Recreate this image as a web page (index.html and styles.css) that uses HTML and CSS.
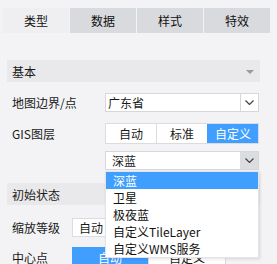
FILE: index.html
```html
<!DOCTYPE html>
<html lang="zh">
<head>
<meta charset="utf-8">
<link rel="stylesheet" href="styles.css">
</head>
<body>
<div class="tabs">
  <div class="tab active">类型</div>
  <div class="tab">数据</div>
  <div class="tab">样式</div>
  <div class="tab">特效</div>
</div>
<div class="panel">
  <div class="section-head"><span>基本</span><span class="tri"></span></div>
  <div class="row r1">
    <div class="label">地图边界/点</div>
    <div class="select"><span class="val v1">广东省</span><span class="btn"><svg width="9" height="5" viewBox="0 0 9 5"><path d="M0.5 0.5 L4.5 4.5 L8.5 0.5" fill="none" stroke="#444" stroke-width="1.2"/></svg></span></div>
  </div>
  <div class="row r2">
    <div class="label">GIS图层</div>
    <div class="seg">
      <span class="opt">自动</span><span class="opt">标准</span><span class="opt on">自定义</span>
    </div>
  </div>
  <div class="row r3">
    <div class="label"></div>
    <div class="select open"><span class="val v2">深蓝</span><span class="btn"><svg width="9" height="5" viewBox="0 0 9 5"><path d="M0.5 0.5 L4.5 4.5 L8.5 0.5" fill="none" stroke="#444" stroke-width="1.2"/></svg></span>
      <ul class="menu">
        <li class="sel">深蓝</li>
        <li>卫星</li>
        <li>极夜蓝</li>
        <li>自定义TileLayer</li>
        <li>自定义WMS服务</li>
      </ul>
    </div>
  </div>
  <div class="section-head s2"><span>初始状态</span></div>
  <div class="row r4">
    <div class="label short">缩放等级</div>
    <div class="seg seg2"><span class="opt o-small">自动</span><span class="opt o-rest"></span></div>
  </div>
  <div class="row r5">
    <div class="label short">中心点</div>
    <div class="seg seg3"><span class="opt on">自动</span><span class="opt">自定义</span></div>
  </div>
</div>
</body>
</html>
```
FILE: styles.css
```css
* { box-sizing: border-box; }
html, body {
  margin: 0;
  padding: 0;
}
body {
  width: 277px;
  height: 264px;
  overflow: hidden;
  background: #f3f3f5;
  font-family: "Noto Sans CJK SC", "Noto Sans", sans-serif;
  font-size: 12px;
  color: #1a1a1a;
}
.tabs {
  display: flex;
  gap: 1px;
  padding: 8px 0 0 3px;
}
.tab {
  width: 66px;
  height: 25px;
  line-height: 25px;
  text-align: center;
  background: #d9dadd;
  font-size: 12px;
  color: #111;
}
.tab.active { background: #efeff1; }
.panel {
  margin: 27px 0 0 7px;
  width: 253px;
}
.section-head {
  height: 22px;
  background: #e9e9eb;
  padding: 0 6px 0 5px;
  display: flex;
  align-items: center;
  justify-content: space-between;
}
.tri {
  width: 0;
  height: 0;
  border-left: 4px solid transparent;
  border-right: 4px solid transparent;
  border-top: 4px solid #9a9a9c;
  margin-top: 1px;
}
.row {
  display: flex;
  align-items: center;
}
.label {
  width: 98px;
  padding-left: 5px;
  flex: none;
}
.label.short { width: 65px; }
.r1 { margin-top: 11px; height: 19px; }
.r2 { margin-top: 11px; height: 21px; }
.r3 { margin-top: 7px; height: 19px; }
.s2 { margin-top: 13px; }
.r4 { margin-top: 13px; height: 19px; }
.r5 { margin-top: 10px; height: 21px; }
.select {
  position: relative;
  width: 154px;
  height: 19px;
  background: #fff;
  border: 1px solid #d7d7d9;
  display: flex;
}
.val {
  flex: 1;
  line-height: 17px;
}
.v1 { padding-left: 2px; }
.v2 { padding-left: 6px; }
.btn {
  width: 18px;
  border-left: 1px solid #d7d7d9;
  display: flex;
  align-items: center;
  justify-content: center;
}
.open .btn {
  background: #dcdde0;
  border-left-color: #dcdde0;
}
.menu {
  position: absolute;
  left: -1px;
  top: 19px;
  width: 154px;
  margin: 0;
  padding: 0;
  list-style: none;
  background: #fff;
  border: 1px solid #e4e4e6;
  box-shadow: 1px 1px 3px rgba(0,0,0,0.12);
  z-index: 5;
}
.menu li {
  height: 17px;
  line-height: 17px;
  padding-left: 7px;
  color: #111;
}
.menu li.sel {
  background: #409eff;
  color: #fff;
}
.seg {
  display: flex;
  width: 154px;
  height: 21px;
  border: 1px solid #dcdcde;
  background: #fff;
}
.opt {
  flex: 1;
  text-align: center;
  line-height: 19px;
}
.opt + .opt { border-left: 1px solid #dcdcde; }
.opt.on {
  background: #409eff;
  color: #fff;
  border-color: #409eff;
}
.seg2 { height: 19px; width: 187px; }
.seg2 .opt { line-height: 17px; }
.o-small { flex: none; width: 36px; }
.seg3 { width: 154px; border-color: #dcdcde; }
.seg3 .opt.on { margin: -1px 0 -1px -1px; line-height: 21px; }
```
